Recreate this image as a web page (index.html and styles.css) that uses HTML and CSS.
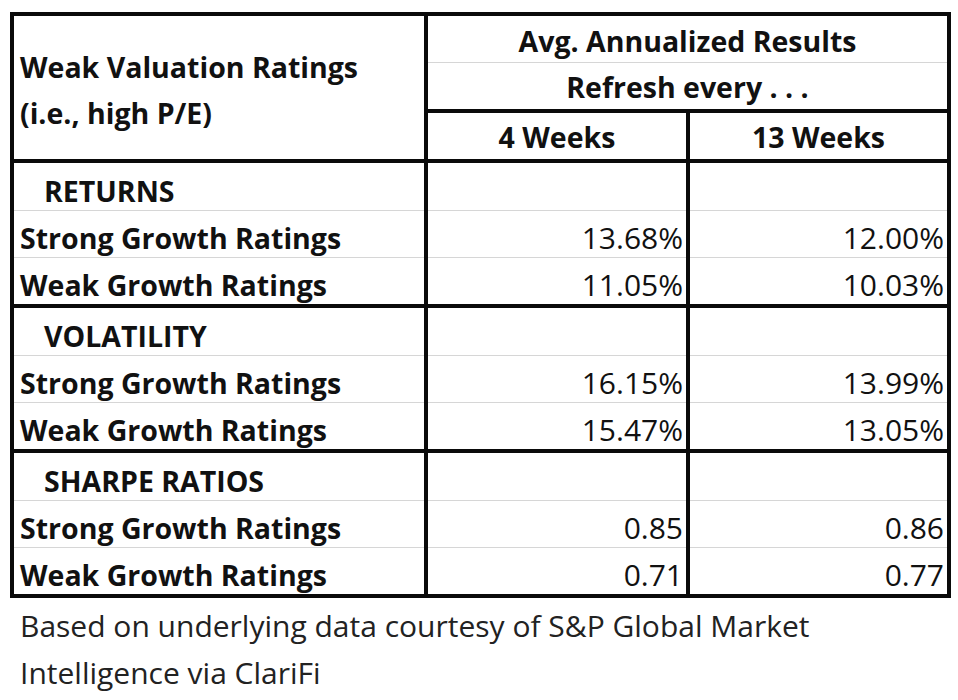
FILE: index.html
```html
<!DOCTYPE html>
<html lang="en">
<head>
<meta charset="utf-8">
<title>Weak Valuation Ratings</title>
<link rel="stylesheet" href="styles.css">
</head>
<body>
<div class="page">
  <table class="results">
    <colgroup>
      <col class="c-label">
      <col class="c-val">
      <col class="c-val2">
    </colgroup>
    <thead>
      <tr class="h1">
        <th class="corner" rowspan="3">Weak Valuation Ratings<br>(i.e., high P/E)</th>
        <th class="span" colspan="2">Avg. Annualized Results</th>
      </tr>
      <tr class="h2">
        <th class="span" colspan="2">Refresh every . . .</th>
      </tr>
      <tr class="h3">
        <th class="wk">4 Weeks</th>
        <th class="wk">13 Weeks</th>
      </tr>
    </thead>
    <tbody>
      <tr class="sec"><td class="label secname">RETURNS</td><td class="num"></td><td class="num"></td></tr>
      <tr class="row"><td class="label">Strong Growth Ratings</td><td class="num">13.68%</td><td class="num">12.00%</td></tr>
      <tr class="row last"><td class="label">Weak Growth Ratings</td><td class="num">11.05%</td><td class="num">10.03%</td></tr>
    </tbody>
    <tbody>
      <tr class="sec"><td class="label secname">VOLATILITY</td><td class="num"></td><td class="num"></td></tr>
      <tr class="row"><td class="label">Strong Growth Ratings</td><td class="num">16.15%</td><td class="num">13.99%</td></tr>
      <tr class="row last"><td class="label">Weak Growth Ratings</td><td class="num">15.47%</td><td class="num">13.05%</td></tr>
    </tbody>
    <tbody>
      <tr class="sec"><td class="label secname">SHARPE RATIOS</td><td class="num"></td><td class="num"></td></tr>
      <tr class="row"><td class="label">Strong Growth Ratings</td><td class="num">0.85</td><td class="num">0.86</td></tr>
      <tr class="row last"><td class="label">Weak Growth Ratings</td><td class="num">0.71</td><td class="num">0.77</td></tr>
    </tbody>
  </table>
  <p class="source">Based on underlying data courtesy of S&amp;P Global Market<br>Intelligence via ClariFi</p>
</div>
</body>
</html>
```

FILE: styles.css
```css
html, body {
  margin: 0;
  padding: 0;
  background: #ffffff;
}

.page {
  padding: 12px 0 0 10px;
  font-family: "Open Sans", "Lato", sans-serif;
  color: #111111;
}

.results {
  border-collapse: collapse;
  table-layout: fixed;
  width: 941px;
  border: 4px solid #0a0a0a;
}

.c-label { width: 414px; }
.c-val { width: 262px; }
.c-val2 { width: 261px; }

.results th,
.results td {
  padding: 0;
  font-size: 28.5px;
  line-height: 34px;
  white-space: nowrap;
  overflow: visible;
}

.results th {
  font-weight: 700;
}

.corner {
  text-align: left;
  vertical-align: middle;
  padding: 4px 0 0 6px !important;
  line-height: 46px !important;
  border-right: 4px solid #0a0a0a;
  border-bottom: 4px solid #0a0a0a;
}

.span {
  text-align: center;
  vertical-align: bottom;
}

.h1 .span {
  height: 42px;
  padding-bottom: 4px !important;
  border-bottom: 1px solid #d6d6d6;
}

.h2 .span {
  height: 41px;
  padding-bottom: 5px !important;
  border-bottom: 4px solid #0a0a0a;
}

.h3 .wk {
  height: 41px;
  text-align: center;
  vertical-align: bottom;
  padding-bottom: 5px !important;
  border-bottom: 4px solid #0a0a0a;
}

.h3 .wk:first-child {
  border-right: 4px solid #0a0a0a;
}

.results td {
  vertical-align: bottom;
  padding-bottom: 2px !important;
  border-bottom: 1px solid #d6d6d6;
}

.results td + td {
  border-left: 4px solid #0a0a0a;
}

.sec td { height: 45px; }
.row td { height: 44px; }

.results tr.last td {
  border-bottom: 4px solid #0a0a0a;
}

.label {
  font-weight: 700;
  padding-left: 6px !important;
}

.secname {
  padding-left: 30px !important;
}

.results td.num {
  text-align: right;
  font-weight: 400;
  font-size: 30px;
  padding-right: 3px !important;
}

.source {
  margin: 4px 0 0 10px;
  font-size: 30px;
  line-height: 47px;
  color: #222222;
}
```
